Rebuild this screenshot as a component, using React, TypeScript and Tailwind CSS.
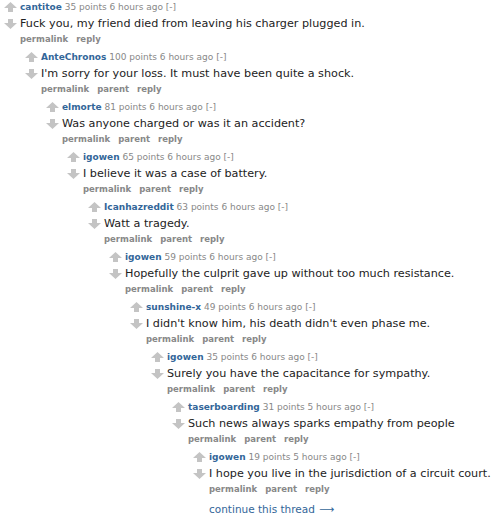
import type { ReactNode } from "react";

interface CommentData {
  author: string;
  points: number;
  age: string;
  body: string;
}

const comments: CommentData[] = [
  { author: "cantitoe", points: 35, age: "6 hours", body: "Fuck you, my friend died from leaving his charger plugged in." },
  { author: "AnteChronos", points: 100, age: "6 hours", body: "I'm sorry for your loss. It must have been quite a shock." },
  { author: "elmorte", points: 81, age: "6 hours", body: "Was anyone charged or was it an accident?" },
  { author: "igowen", points: 65, age: "6 hours", body: "I believe it was a case of battery." },
  { author: "Icanhazreddit", points: 63, age: "6 hours", body: "Watt a tragedy." },
  { author: "igowen", points: 59, age: "6 hours", body: "Hopefully the culprit gave up without too much resistance." },
  { author: "sunshine-x", points: 49, age: "6 hours", body: "I didn't know him, his death didn't even phase me." },
  { author: "igowen", points: 35, age: "6 hours", body: "Surely you have the capacitance for sympathy." },
  { author: "taserboarding", points: 31, age: "5 hours", body: "Such news always sparks empathy from people" },
  { author: "igowen", points: 19, age: "5 hours", body: "I hope you live in the jurisdiction of a circuit court." },
];

function Arrow({ down }: { down?: boolean }) {
  return (
    <svg width="13" height="10" viewBox="0 0 13 10" className={down ? "rotate-180" : ""}>
      <path d="M6.5 0 L13 6 L9 6 L9 10 L4 10 L4 6 L0 6 Z" fill="#c4c4c4" />
    </svg>
  );
}

function Comment({ index }: { index: number }) {
  const c = comments[index];
  const last = index === comments.length - 1;
  let child: ReactNode = null;
  if (!last) {
    child = <Comment index={index + 1} />;
  }
  return (
    <div>
      <div className="flex">
        <div className="w-[20px] shrink-0 flex flex-col items-start pl-[4px] pt-[2px] gap-[7px]">
          <Arrow />
          <Arrow down />
        </div>
        <div className="flex flex-col">
          <div className="text-[9px] leading-[14px] text-[#888]">
            <span className="font-bold text-[#369]">{c.author}</span> {c.points} points {c.age} ago [-]
          </div>
          <div className="text-[11.2px] leading-[18px] mt-[1px] text-[#222] whitespace-nowrap">{c.body}</div>
          <div className="text-[8.5px] leading-[12px] font-bold text-[#888] flex gap-[8px]">
            <span>permalink</span>
            {index > 0 && <span>parent</span>}
            <span>reply</span>
          </div>
          {last && (
            <div className="text-[10.5px] leading-[16px] mt-[6px] text-[#369] flex items-center gap-[4px] whitespace-nowrap">
              continue this thread
              <span className="text-[#369]">⟶</span>
            </div>
          )}
        </div>
      </div>
      {child && <div className="pl-[21px] mt-[5px]">{child}</div>}
    </div>
  );
}

export default function App() {
  return (
    <div className="w-[495px] h-[515px] bg-white overflow-hidden font-['DejaVu_Sans',sans-serif]">
      <Comment index={0} />
    </div>
  );
}
